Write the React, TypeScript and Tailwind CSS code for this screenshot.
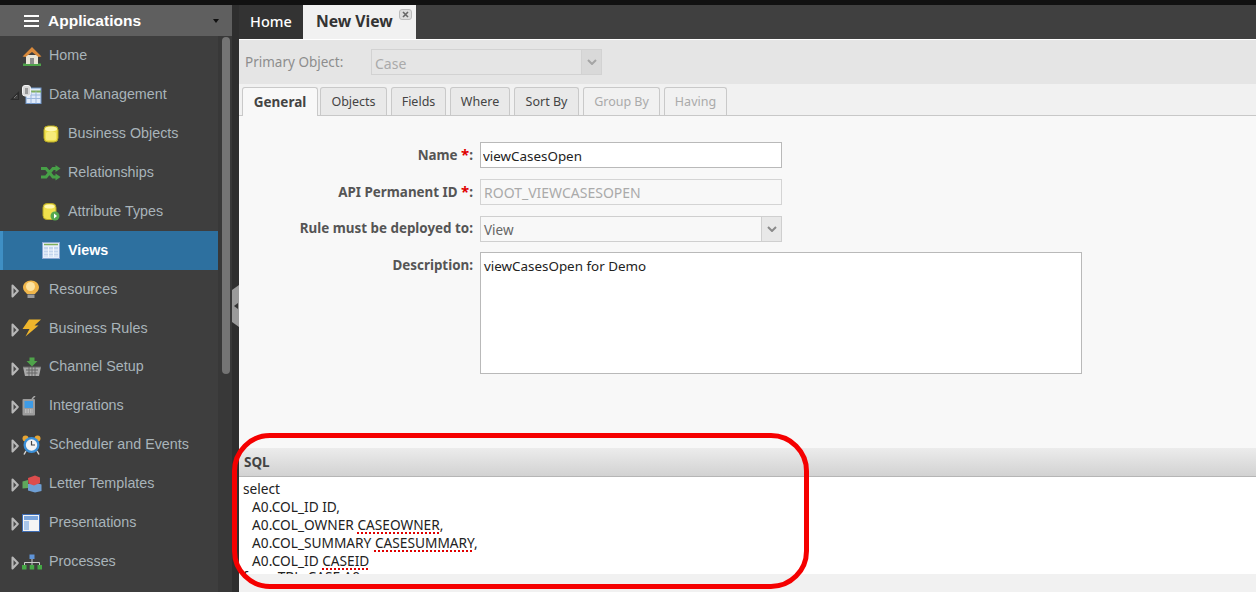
import React from "react";

const Tree = ({ open }: { open?: boolean }) =>
  open ? (
    <svg width="10" height="10" viewBox="0 0 10 10" className="shrink-0">
      <path d="M1.5 8.5 L8.5 8.5 L8.5 1.5 Z" fill="none" stroke="#2a2a2a" strokeWidth="1.2" />
      <path d="M4 7 L7 4" stroke="#777" strokeWidth="1" />
    </svg>
  ) : (
    <svg width="8" height="14" viewBox="0 0 8 14" className="shrink-0">
      <path d="M1.5 1.5 L6.8 7 L1.5 12.5 Z" fill="#4a4a4a" stroke="#b8b8b8" strokeWidth="2" strokeLinejoin="round" />
    </svg>
  );

const icons: Record<string, React.ReactNode> = {
  home: (
    <svg width="20" height="20" viewBox="0 0 20 20">
      <path d="M1 17.5 H19 V20 H1 Z" fill="#4fa34a" />
      <path d="M4 9 H16 V18 H4 Z" fill="#e9e4d6" />
      <path d="M8 12 H12 V18 H8 Z" fill="#8b8b8b" />
      <path d="M0.5 10.5 L10 1 L19.5 10.5 L16.5 11 L10 6 L3.5 11 Z" fill="#d9893a" />
    </svg>
  ),
  data: (
    <svg width="20" height="20" viewBox="0 0 20 20">
      <rect x="4" y="3" width="15" height="15.5" fill="#dfeafa" stroke="#6f95c8" />
      <path d="M4 6.5 H19" stroke="#7fae5a" strokeWidth="2" />
      <path d="M4 10 H19 M4 13.5 H19 M9 6.5 V18.5 M14 6.5 V18.5" stroke="#9cb7dc" />
      <rect x="0.5" y="0.5" width="8" height="10.5" rx="2.5" fill="#d8d8d8" stroke="#f4f4f4" />
      <rect x="3" y="3" width="3" height="6" fill="#9a9a9a" />
    </svg>
  ),
  bo: (
    <svg width="16" height="18" viewBox="0 0 16 18">
      <rect x="1" y="1" width="14" height="16" rx="4" fill="#efe04c" stroke="#b7a824" />
      <ellipse cx="8" cy="4" rx="6" ry="2.4" fill="#fff8b0" />
      <rect x="3" y="7" width="10" height="8" rx="1.5" fill="#f7ec7a" />
    </svg>
  ),
  rel: (
    <svg width="20" height="16" viewBox="0 0 20 16">
      <path d="M0 3.5 H5 L12 12 H15 M0 12 H5 L12 3.5 H15" fill="none" stroke="#47a047" strokeWidth="3" />
      <path d="M14.5 0 L19.5 3.5 L14.5 7 Z M14.5 8.5 L19.5 12 L14.5 15.5 Z" fill="#47a047" />
    </svg>
  ),
  attr: (
    <svg width="18" height="18" viewBox="0 0 18 18">
      <rect x="1" y="0.5" width="13" height="16" rx="4" fill="#efe04c" stroke="#b7a824" />
      <ellipse cx="7.5" cy="3.5" rx="5" ry="2" fill="#fff8b0" />
      <circle cx="13" cy="13" r="4.5" fill="#55a84f" />
      <path d="M12 10.5 L15 13 L12 15.5 Z" fill="#fff" />
    </svg>
  ),
  views: (
    <svg width="18" height="17" viewBox="0 0 18 17">
      <rect x="0.5" y="0.5" width="17" height="16" fill="#e7effb" stroke="#8aa6d2" />
      <path d="M2 2.5 H16" stroke="#7fae5a" strokeWidth="1.5" />
      <path d="M2 5 H16 V15 H2 Z" fill="#c4d5ee" />
      <path d="M2 8 H16 M2 11 H16 M2 14 H16 M6.5 5 V15 M11.5 5 V15" stroke="#f3f7fd" />
    </svg>
  ),
  res: (
    <svg width="18" height="19" viewBox="0 0 18 19">
      <path d="M9 0.5 C13.5 0.5 17 3.5 17 7.5 C17 10.5 14.5 12 13 14 H5 C3.5 12 1 10.5 1 7.5 C1 3.5 4.5 0.5 9 0.5 Z" fill="#f0b64a" />
      <circle cx="8.5" cy="6.5" r="4.5" fill="#fde3a0" />
      <rect x="5.5" y="14.5" width="7" height="3.5" fill="#9a9a9a" />
    </svg>
  ),
  rules: (
    <svg width="20" height="18" viewBox="0 0 20 18">
      <path d="M7 0.5 H19 L12.5 6.5 H16.5 L3.5 17.5 L7.5 10 H0.5 Z" fill="#eeb52c" />
    </svg>
  ),
  chan: (
    <svg width="20" height="20" viewBox="0 0 20 20">
      <path d="M1 10 H19 L17 19 H3 Z" fill="#a9a9a9" />
      <path d="M1 10 H19 M4 13 H16 M4.5 16 H15.5 M7 10 V19 M10 10 V19 M13 10 V19" stroke="#666" strokeWidth="1" />
      <path d="M7.5 0.5 H12.5 V4 H15.5 L10 9.5 L4.5 4 H7.5 Z" fill="#4fa34a" />
    </svg>
  ),
  int: (
    <svg width="14" height="20" viewBox="0 0 14 20">
      <path d="M10 3 L13 0" stroke="#aaa" strokeWidth="1.5" />
      <rect x="0.5" y="3" width="12.5" height="16.5" rx="1" fill="#9c9c9c" />
      <rect x="2.5" y="5" width="8.5" height="7" fill="#3d9be6" />
      <path d="M3 14 H11 M3 16 H11" stroke="#d6d6d6" strokeWidth="1" strokeDasharray="1.5 1" />
    </svg>
  ),
  sch: (
    <svg width="19" height="20" viewBox="0 0 19 20">
      <circle cx="3.5" cy="3.5" r="3" fill="#e6a534" />
      <circle cx="15.5" cy="3.5" r="3" fill="#e6a534" />
      <path d="M4 16 L2 19.5 M15 16 L17 19.5" stroke="#d5d5d5" strokeWidth="1.5" />
      <circle cx="9.5" cy="10" r="8" fill="#3a8fd8" />
      <circle cx="9.5" cy="10" r="5.7" fill="#f3f3f3" />
      <path d="M9.5 6 V10 H13" stroke="#444" strokeWidth="1.2" fill="none" />
    </svg>
  ),
  let: (
    <svg width="20" height="18" viewBox="0 0 20 18">
      <path d="M0.5 6.5 L6 5 V13 L0.5 13.5 Z" fill="#5fa85c" />
      <path d="M6 9 L13 7.5 L19.5 9.5 V16 L13 17.5 L6 15.5 Z" fill="#6f9fd4" />
      <path d="M6 3 L13 0.5 L18 2.5 V8 L12 10.5 L6.5 8.5 Z" fill="#dc4d4d" />
    </svg>
  ),
  pre: (
    <svg width="18" height="18" viewBox="0 0 18 18">
      <rect x="0.5" y="0.5" width="17" height="17" fill="#f4f4f4" stroke="#3f6db3" />
      <rect x="2" y="2" width="14" height="4" fill="#79a4dc" />
      <rect x="2" y="7" width="5" height="9" fill="#a9c6ea" />
    </svg>
  ),
  proc: (
    <svg width="20" height="16" viewBox="0 0 20 16">
      <rect x="7.5" y="0.5" width="5" height="4.5" fill="#5f94d8" />
      <path d="M10 5 V9 M2.5 11 V8.5 H17.5 V11 M10 9 V11" stroke="#ccc" strokeWidth="1" fill="none" />
      <rect x="0" y="11" width="4.5" height="4.5" fill="#45a845" />
      <rect x="7.7" y="11" width="4.5" height="4.5" fill="#45a845" />
      <rect x="15.5" y="11" width="4.5" height="4.5" fill="#45a845" />
    </svg>
  ),
};

type Item = { label: string; icon: string; tree?: "open" | "closed"; child?: boolean; active?: boolean };
const items: Item[] = [
  { label: "Home", icon: "home" },
  { label: "Data Management", icon: "data", tree: "open" },
  { label: "Business Objects", icon: "bo", child: true },
  { label: "Relationships", icon: "rel", child: true },
  { label: "Attribute Types", icon: "attr", child: true },
  { label: "Views", icon: "views", child: true, active: true },
  { label: "Resources", icon: "res", tree: "closed" },
  { label: "Business Rules", icon: "rules", tree: "closed" },
  { label: "Channel Setup", icon: "chan", tree: "closed" },
  { label: "Integrations", icon: "int", tree: "closed" },
  { label: "Scheduler and Events", icon: "sch", tree: "closed" },
  { label: "Letter Templates", icon: "let", tree: "closed" },
  { label: "Presentations", icon: "pre", tree: "closed" },
  { label: "Processes", icon: "proc", tree: "closed" },
];

const NavRow = ({ item }: { item: Item }) => (
  <div
    className={`h-[38.9px] flex items-center ${
      item.active ? "bg-[#2d709f] border-l-[3px] border-[#3f8fc4] text-white font-bold" : "text-[#a9b4ba]"
    }`}
  >
    <div className={`${item.active ? "w-[7px]" : "w-[10px]"} shrink-0`} />
    <div className="w-[10px] shrink-0 flex justify-center mt-[3px]">
      {item.tree === "open" && <Tree open />}
      {item.tree === "closed" && <Tree />}
    </div>
    <div className={`${item.child ? "w-[48px] pl-[14px] justify-center" : "w-[29px] pl-[2px] justify-start"} shrink-0 flex items-center`}>
      {icons[item.icon]}
    </div>
    <span className="text-[14.3px] leading-none mt-[-1px]">{item.label}</span>
  </div>
);

const tabs = [
  { label: "General", w: "w-[77px]", active: true },
  { label: "Objects", w: "w-[70px]" },
  { label: "Fields", w: "w-[58px]" },
  { label: "Where", w: "w-[63px]" },
  { label: "Sort By", w: "w-[68px]" },
  { label: "Group By", w: "w-[80px]", disabled: true },
  { label: "Having", w: "w-[66px]", disabled: true },
];

const Chevron = ({ color = "#8a8a8a" }: { color?: string }) => (
  <svg width="10" height="6" viewBox="0 0 10 6">
    <path d="M1 1 L5 5 L9 1" fill="none" stroke={color} strokeWidth="2" />
  </svg>
);

const Label = ({ children }: { children: React.ReactNode }) => (
  <div className="w-[234px] shrink-0 text-right text-[13.4px] font-bold text-[#555] leading-none">{children}</div>
);
const Star = () => <span className="text-[#e00000] text-[15px]">*</span>;

const Underlined = ({ children }: { children: React.ReactNode }) => (
  <span className="underline decoration-dotted decoration-[#e00000] decoration-2 underline-offset-2">{children}</span>
);

export default function App() {
  return (
    <div className="relative h-[592px] w-[1256px] overflow-hidden bg-[#111] flex flex-col font-['Noto_Sans',sans-serif]">
      <div className="h-[5px] shrink-0" />
      <div className="flex flex-1 min-h-0">
        <aside className="w-[239px] shrink-0 flex bg-[#2e2e2e] font-['Liberation_Sans',sans-serif]">
          <div className="w-[232px] flex flex-col">
            <div className="h-[31px] bg-[#5f5f5f] flex items-center text-white font-bold text-[15.5px]">
              <div className="ml-[24px] w-[15px] flex flex-col gap-[3px]">
                <div className="h-[2px] bg-white" />
                <div className="h-[2px] bg-white" />
                <div className="h-[2px] bg-white" />
              </div>
              <span className="ml-[9px] flex-1">Applications</span>
              <div className="mr-[13px] mt-[1px] w-0 h-0 border-x-[3.5px] border-x-transparent border-t-[4px] border-t-[#111]" />
            </div>
            <div className="flex flex-1 min-h-0">
              <div className="w-[218px] bg-[#3e3e3e] shrink-0 pt-[0.5px]">
                {items.map((i) => (
                  <NavRow key={i.label} item={i} />
                ))}
              </div>
              <div className="flex-1 bg-[#383838] pt-[1px] pl-[4px]">
                <div className="w-[8px] h-[337px] rounded-full bg-[#747474]" />
              </div>
            </div>
          </div>
          <div className="flex-1 flex items-center pb-[6px]">
            <div className="mt-[21px] w-[7px] h-[42px] bg-[#9a9a9a] flex items-center justify-center [clip-path:polygon(0_12%,100%_0,100%_100%,0_88%)]">
              <div className="w-0 h-0 border-y-[3px] border-y-transparent border-r-[4px] border-r-[#333]" />
            </div>
          </div>
        </aside>

        <main className="flex-1 min-w-0 flex flex-col bg-[#f8f8f8]">
          <div className="h-[34px] shrink-0 bg-[#404040] flex">
            <div className="w-[64px] bg-[#333] text-white text-[14.5px] font-medium flex items-center justify-center">Home</div>
            <div className="w-[113px] bg-[#f1f1f1] text-[#333] text-[15.7px] font-bold flex items-center pl-[13px] relative">
              New View
              <span className="absolute right-[4px] top-[4px] w-[13px] h-[11px] rounded-[3px] bg-[#ddd] border border-[#bbb] flex items-center justify-center">
                <svg width="7" height="7" viewBox="0 0 7 7">
                  <path d="M1 1 L6 6 M6 1 L1 6" stroke="#666" strokeWidth="1.6" />
                </svg>
              </span>
            </div>
          </div>
          <div className="h-[1px] shrink-0 bg-[#fff]" />
          <div className="h-[44px] shrink-0 bg-[#e5e5e5] flex items-center pl-[6px]">
            <span className="text-[13.5px] text-[#8d8d8d] w-[126px]">Primary Object:</span>
            <div className="w-[231px] h-[26px] border border-[#d2d2d2] flex items-stretch mt-[-1px]">
              <span className="flex-1 pl-[3px] text-[14px] text-[#aaa] leading-[27px]">Case</span>
              <div className="w-[20px] bg-[#d9d9d9] border-l border-[#d2d2d2] flex items-center justify-center">
                <Chevron color="#a5a5a5" />
              </div>
            </div>
          </div>
          <div className="h-[32px] shrink-0 bg-[#f1f1f1] border-b border-[#c8c8c8] flex items-end gap-[1px] pl-[3px]">
            {tabs.map((t, i) => (
              <div key={t.label} className={`${t.w} h-[28px] flex`}>
                <div
                  className={`${i === 0 ? "w-[76px]" : "w-full mr-[3px] pt-[1px]"} border border-b-0 border-[#c9c9c9] rounded-t-[3px] flex items-center justify-center ${
                    t.active
                      ? "bg-[#f8f8f8] font-bold text-[13.5px] text-[#444] h-[29px] relative"
                      : t.disabled
                      ? "bg-[#f1f1f1] text-[12.5px] text-[#aaa]"
                      : "bg-[#e9e9e9] text-[12.5px] text-[#444]"
                  }`}
                >
                  {t.label}
                </div>
              </div>
            ))}
          </div>

          <div className="pt-[26px] flex flex-col">
            <div className="flex items-center h-[26px]">
              <Label>
                Name <Star />:
              </Label>
              <input
                readOnly
                value="viewCasesOpen"
                className="ml-[7px] w-[302px] h-[26px] bg-white border border-[#b9b9b9] px-[2px] pt-[1px] text-[13.4px] text-[#222] outline-none"
              />
            </div>
            <div className="flex items-center h-[26px] mt-[11px]">
              <Label>
                API Permanent ID <Star />:
              </Label>
              <div className="ml-[7px] w-[302px] h-[26px] border border-[#d4d4d4] px-[3px] text-[14px] text-[#aaa] leading-[26px]">ROOT_VIEWCASESOPEN</div>
            </div>
            <div className="flex items-center h-[26px] mt-[11px]">
              <Label>Rule must be deployed to:</Label>
              <div className="ml-[7px] w-[302px] h-[26px] border border-[#cfcfcf] flex">
                <span className="flex-1 px-[3px] text-[13.5px] text-[#666] leading-[27px]">View</span>
                <div className="w-[20px] bg-[#e8e8e8] border-l border-[#cfcfcf] flex items-center justify-center">
                  <Chevron />
                </div>
              </div>
            </div>
            <div className="flex mt-[10px]">
              <div className="pt-[7px]">
                <Label>Description:</Label>
              </div>
              <div className="ml-[7px] w-[602px] h-[122px] bg-white border border-[#b9b9b9] px-[3px] py-[3px] text-[13.4px] text-[#222] leading-[20px]">viewCasesOpen for Demo</div>
            </div>
          </div>

          <div className="mt-[74px] h-[29px] shrink-0 bg-gradient-to-b from-[#ececec] to-[#d2d2d2] border-b border-[#b5b5b5] flex items-center pl-[5px] pt-[1px] text-[13.5px] font-bold text-[#444]">SQL</div>
          <div className="h-[97px] shrink-0 bg-white overflow-hidden pl-[4px] pt-[3px] text-[13.7px] leading-[18px] text-[#222] whitespace-pre">
            <div>select</div>
            <div className="pl-[2px]">  A0.COL_ID ID,</div>
            <div className="pl-[2px]">  A0.COL_OWNER <Underlined>CASEOWNER</Underlined>,</div>
            <div className="pl-[2px]">  A0.COL_SUMMARY <Underlined>CASESUMMARY</Underlined>,</div>
            <div className="pl-[2px]">  A0.COL_ID <Underlined>CASEID</Underlined></div>
            <div className="leading-[14px]">from TBL_CASE A0</div>
          </div>
          <div className="flex-1 bg-[#f1f1f1]" />
        </main>
      </div>
      <div className="absolute left-[232px] top-[433px] w-[577px] h-[156px] rounded-[38px] border-[5px] border-[#f50000] pointer-events-none" />
    </div>
  );
}
